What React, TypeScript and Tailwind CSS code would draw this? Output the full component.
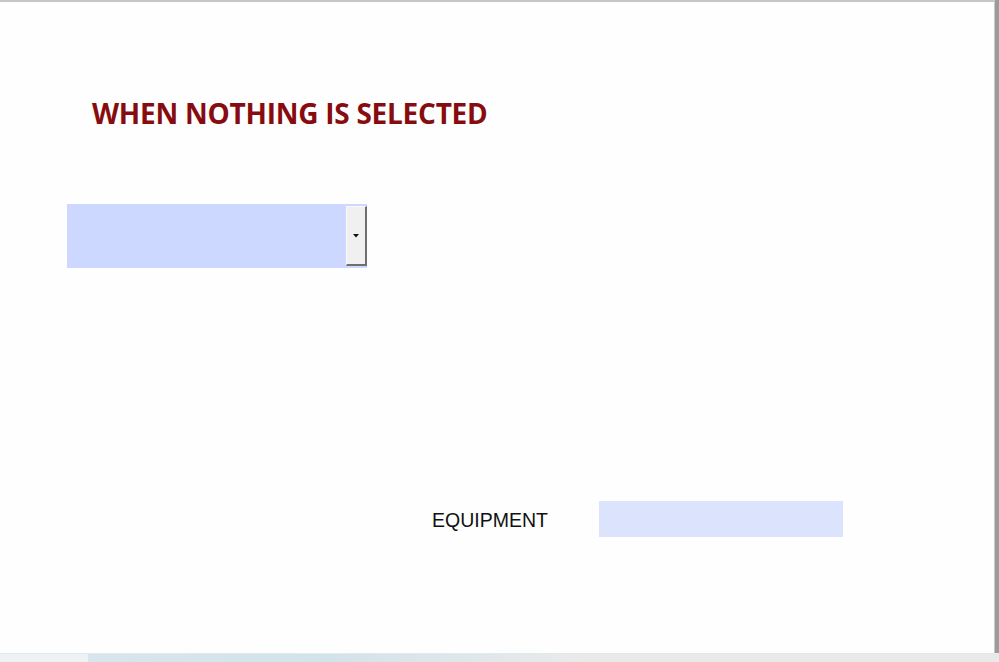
export default function App() {
  return (
    <div className="flex h-[662px] w-[999px] flex-col overflow-hidden bg-white">
      <div className="flex min-h-0 flex-1">
        <div className="flex-1 border-t-2 border-[#c6c6c6] bg-[#fefefe]">
          <h1
            className="ml-[92px] mt-[93px] text-[28px] font-bold leading-[36px] tracking-[-0.25px] text-[#870c10]"
            style={{ fontFamily: '"Open Sans", "Liberation Sans", sans-serif' }}
          >
            WHEN NOTHING IS SELECTED
          </h1>
          <div className="ml-[67px] mt-[73px] flex h-[64px] w-[300px] items-stretch bg-[#ccd8ff] p-[2px] pr-0">
            <div className="flex-1" />
            <div className="flex w-[21px] items-center justify-center border-b-2 border-r-2 border-l border-t border-b-[#6f6f6f] border-r-[#6f6f6f] border-l-[#fafafa] border-t-[#fafafa] bg-[#f0f0f0]">
              <svg width="6" height="4" viewBox="0 0 6 4">
                <path d="M0 0h6L3 3.5z" fill="#111" />
              </svg>
            </div>
          </div>
          <div className="mt-[233px] flex items-center">
            <span
              className="ml-[432px] w-[167px] pt-[3px] text-[19.5px] text-[#111]"
              style={{ fontFamily: '"Liberation Sans", Arial, sans-serif' }}
            >
              EQUIPMENT
            </span>
            <div className="h-[36px] w-[244px] bg-[#dce3fd]" />
          </div>
        </div>
        <div className="flex w-[5px] border-l border-[#c9c9c9] bg-[#9c9c9c]" />
      </div>
      <div className="flex h-[9px] border-t border-[#e3e9ec]">
        <div className="w-[88px] bg-[#edf3f5]" />
        <div className="flex-1 bg-gradient-to-r from-[#d6e6ec] via-[#d3e3ea] to-[#e9eaea]" />
        <div className="w-[420px] bg-[#e8e9e9]" />
      </div>
    </div>
  );
}
